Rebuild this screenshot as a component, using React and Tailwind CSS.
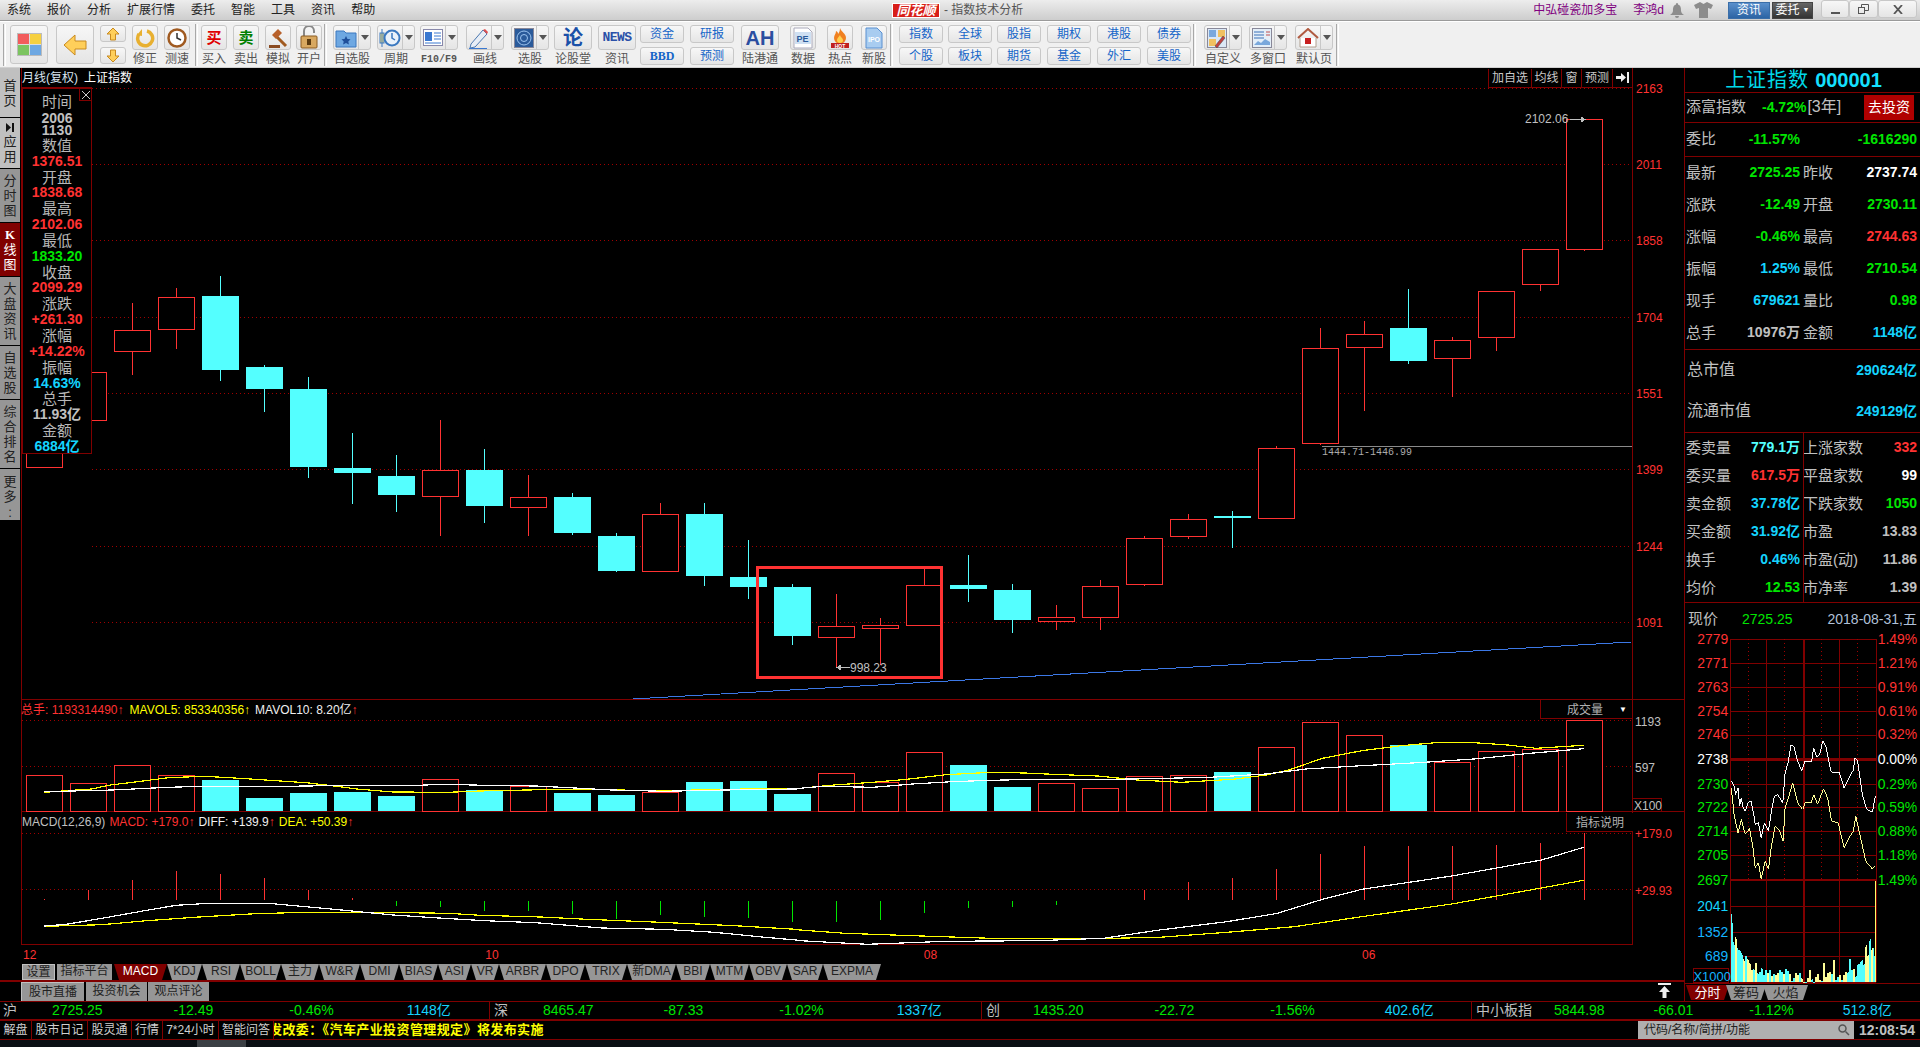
import React from 'react';

const RED = '#ff3232';
const CYAN = '#54ffff';
const LINE = '#800000';
const DOT = '#a00000';
const GREEN_TXT = '#00e600';
const GRAY_TXT = '#c0c0c0';

// [up, high, body top, body bottom, low], one row per month, 44px apart
const CANDLES = [
  [1, 400, 400, 467, 467], [1, 372, 372, 420, 420], [1, 303, 330, 351, 375], [1, 288, 297, 329, 349],
  [0, 276, 296, 370, 381], [0, 365, 367, 389, 412], [0, 377, 389, 467, 478], [0, 433, 468, 473, 504],
  [0, 455, 476, 495, 512], [1, 420, 470, 496, 536], [0, 449, 470, 506, 523], [1, 475, 497, 507, 536],
  [0, 493, 497, 533, 535], [0, 533, 536, 571, 572], [1, 503, 514, 571, 572], [0, 503, 514, 576, 586],
  [0, 540, 577, 587, 599], [0, 584, 587, 636, 645], [1, 594, 626, 637, 667], [1, 618, 625, 628, 665],
  [1, 569, 585, 625, 626], [0, 555, 585, 589, 602], [0, 584, 590, 620, 633], [1, 605, 617, 621, 630],
  [1, 580, 586, 617, 630], [1, 536, 538, 584, 586], [1, 514, 519, 536, 539], [0, 511, 516, 518, 548],
  [1, 446, 448, 518, 518], [1, 328, 348, 443, 445], [1, 321, 334, 347, 411], [0, 289, 328, 361, 364],
  [1, 337, 340, 358, 397], [1, 291, 291, 337, 351], [1, 249, 249, 284, 291], [1, 119, 119, 249, 251],
];
// [up, top]
const VOLUME = [
  [1, 775], [1, 783], [1, 765], [1, 775], [0, 780], [0, 798], [0, 793], [0, 792], [0, 796], [1, 779], [0, 790], [1, 786],
  [0, 793], [0, 795], [1, 792], [0, 782], [0, 781], [0, 794], [1, 773], [1, 782], [1, 752], [0, 765], [0, 787], [1, 783],
  [1, 788], [1, 776], [1, 775], [0, 772], [1, 747], [1, 722], [1, 735], [0, 745], [1, 762], [1, 751], [1, 749], [1, 720],
];
const MACD_BARS = [
  899, 890, 880, 871, 874, 878, 890, 898, 906, 907, 911, 911, 914, 919, 915, 917, 918, 922, 922, 920, 913, 908, 907, 905,
  901, 890, 882, 878, 869, 854, 846, 846, 846, 845, 843, 833,
];

const cx = (i) => 44.5 + 44 * i;
const leftPts = (list) => list.map(([x, y]) => [x / 1.96, 690 + y / 3]);
const rightPts = (list) => list.map(([x, y]) => [800 + x / 1.78, 690 + y / 3]);
const toStr = (list) => list.map(([x, y]) => `${x.toFixed(1)},${y.toFixed(1)}`).join(' ');

const VOL_YELLOW = toStr([
  ...leftPts([[87, 307], [130, 302], [180, 297], [216, 285], [270, 275], [330, 263], [400, 259], [470, 265], [540, 272], [600, 278], [650, 287], [700, 297], [770, 306], [880, 307], [940, 303], [1100, 298], [1200, 299], [1260, 302], [1320, 302], [1400, 298], [1560, 296]]),
  ...rightPts([[0, 295], [60, 285], [130, 277], [190, 268], [260, 254], [340, 247], [400, 249], [450, 253], [530, 258], [600, 270], [680, 277], [770, 268], [830, 255], [870, 240], [930, 205], [1000, 182], [1070, 167], [1140, 157], [1200, 158], [1260, 165], [1310, 175], [1395, 166]]),
]);
const VOL_WHITE = toStr([
  ...leftPts([[87, 305], [220, 300], [330, 292], [400, 289], [560, 289], [640, 287], [820, 286], [870, 283], [950, 286], [1050, 288], [1100, 292], [1200, 300], [1300, 304], [1450, 299], [1560, 297]]),
  ...rightPts([[0, 295], [40, 289], [130, 292], [200, 282], [270, 275], [340, 271], [420, 268], [560, 268], [620, 266], [730, 262], [830, 252], [900, 237], [1000, 227], [1100, 218], [1200, 207], [1300, 190], [1395, 176]]),
]);
const DIFF = toStr([
  ...leftPts([[87, 708], [130, 703], [200, 685], [280, 663], [345, 646], [410, 640], [525, 640], [600, 650], [690, 663], [770, 675], [860, 684], [950, 692], [1050, 698], [1180, 714], [1300, 718], [1400, 727], [1500, 742], [1560, 750]]),
  ...rightPts([[0, 752], [120, 763], [260, 754], [420, 752], [540, 745], [640, 720], [760, 695], [850, 670], [930, 628], [1000, 598], [1160, 558], [1320, 510], [1395, 472]]),
]);
const DEA = toStr([
  ...leftPts([[87, 709], [200, 704], [280, 693], [390, 681], [500, 671], [600, 667], [730, 667], [880, 670], [940, 676], [1060, 681], [1150, 688], [1280, 696], [1440, 707], [1560, 718]]),
  ...rightPts([[0, 720], [80, 730], [200, 737], [340, 745], [520, 746], [640, 742], [760, 727], [880, 710], [1000, 680], [1160, 642], [1300, 600], [1395, 571]]),
]);

const miniPts = (list) => toStr(list.map(([x, y]) => [1680 + x / 3, 620 + y / 3]));
const MINI_WHITE = miniPts([[150, 480], [157, 490], [163, 520], [170, 500], [175, 555], [180, 530], [186, 560], [192, 570], [200, 545], [210, 538], [216, 570], [222, 610], [232, 605], [240, 650], [250, 605], [262, 630], [270, 575], [280, 525], [290, 520], [305, 545], [312, 455], [322, 420], [330, 370], [338, 375], [350, 420], [362, 448], [372, 420], [392, 420], [398, 380], [408, 408], [418, 395], [425, 358], [435, 375], [450, 450], [460, 455], [475, 452], [490, 500], [505, 470], [518, 445], [522, 410], [530, 415], [545, 520], [558, 565], [575, 572], [584, 525]]);
const MINI_YELLOW = miniPts([[150, 500], [158, 580], [170, 635], [180, 595], [192, 640], [205, 622], [215, 680], [222, 740], [232, 725], [240, 775], [252, 720], [262, 745], [270, 680], [282, 615], [295, 628], [306, 660], [312, 560], [322, 530], [335, 485], [350, 545], [365, 565], [372, 545], [390, 545], [398, 520], [410, 550], [428, 502], [440, 530], [452, 600], [472, 605], [490, 680], [505, 650], [518, 630], [525, 585], [535, 630], [555, 720], [575, 745], [584, 735]]);

// envelope of the intraday volume, in px from page top
const ENVELOPE = [[1730, 913], [1732, 930], [1737, 943], [1743, 953], [1753, 960], [1770, 967], [1797, 970], [1803, 973], [1837, 970], [1853, 968], [1863, 957], [1872, 941], [1873, 950]];
const envelopeAt = (x) => {
  for (let i = 1; i < ENVELOPE.length; i++) {
    const [x0, y0] = ENVELOPE[i - 1];
    const [x1, y1] = ENVELOPE[i];
    if (x <= x1) return y0 + ((y1 - y0) * (x - x0)) / (x1 - x0);
  }
  return 950;
};
const hash = (n) => {
  const v = Math.sin(n * 12.9898) * 43758.5453;
  return v - Math.floor(v);
};
const MINI_BARS = Array.from({ length: 145 }, (_, i) => {
  const x = 1730 + i;
  const group = Math.floor(i / 2);
  return {
    x,
    top: Math.round(envelopeAt(x) + hash(group) * 12 - (hash(group + 50) > 0.9 ? 12 : 0)),
    yellow: hash(group + 99) > 0.55,
  };
});

const Dotted = ({ y, x1 = 22, x2 = 1632 }) => (
  <line x1={x1} x2={x2} y1={y + 0.5} y2={y + 0.5} stroke={DOT} strokeDasharray="1 3" />
);

function Candle({ i, data }) {
  const [up, high, top, bottom, low] = data;
  const x = cx(i);
  const color = up ? RED : CYAN;
  return (
    <g>
      <line x1={x} x2={x} y1={high} y2={low} stroke={color} />
      {up ? (
        <rect x={x - 18} y={top + 0.5} width={36} height={bottom - top} fill="#000" stroke={color} />
      ) : (
        <rect x={x - 18.5} y={top} width={37} height={bottom - top} fill={color} />
      )}
    </g>
  );
}

function PriceChart() {
  const axis = [[88, '2163'], [164, '2011'], [240, '1858'], [317, '1704'], [393, '1551'], [469, '1399'], [546, '1244'], [622, '1091']];
  return (
    <svg className="absolute inset-0" width="1663" height="632" viewBox="21 68 1663 632" shapeRendering="crispEdges">
      <line x1="21.5" x2="21.5" y1="68" y2="700" stroke={LINE} />
      <line x1="1632.5" x2="1632.5" y1="68" y2="700" stroke={LINE} />
      <line x1="21" x2="1684" y1="699.5" y2="699.5" stroke={LINE} />
      <line x1="21" x2="92" y1="88" y2="88" stroke={LINE} strokeWidth="2" />
      {axis.map(([y, label]) => (
        <g key={label}>
          <Dotted y={y} x1={92} />
          <text x="1636" y={y + 5} fontSize="12" fill={RED} textRendering="optimizeSpeed">{label}</text>
        </g>
      ))}
      <line x1="633" y1="699" x2="1631" y2="642" stroke="#3c78e6" />
      <line x1="1322" y1="446.5" x2="1632" y2="446.5" stroke="#8a8a8a" />
      {CANDLES.map((d, i) => <Candle key={i} i={i} data={d} />)}
      <rect x="757.5" y="567.5" width="184" height="110" fill="none" stroke={RED} strokeWidth="3" />
      <line x1="840" x2="850" y1="667.5" y2="667.5" stroke={GRAY_TXT} />
      <path d="M836 667.5l5-3v6z" fill={GRAY_TXT} />
      <text x="850" y="672" fontSize="12" fill={GRAY_TXT}>998.23</text>
      <text x="1525" y="123" fontSize="12" fill={GRAY_TXT}>2102.06</text>
      <line x1="1570" x2="1582" y1="119.5" y2="119.5" stroke={GRAY_TXT} />
      <path d="M1586 119.5l-5-3v6z" fill={GRAY_TXT} />
      <text x="1322" y="455" fontSize="10" fill="#aaa" fontFamily="'Liberation Mono', monospace">1444.71-1446.99</text>
    </svg>
  );
}

function VolumeChart() {
  return (
    <svg className="absolute inset-0" width="1663" height="112" viewBox="21 700 1663 112" shapeRendering="crispEdges">
      <line x1="21.5" x2="21.5" y1="700" y2="812" stroke={LINE} />
      <line x1="1632.5" x2="1632.5" y1="700" y2="812" stroke={LINE} />
      <Dotted y={720} />
      <Dotted y={766} />
      <line x1="21" x2="1684" y1="811.5" y2="811.5" stroke={LINE} />
      {VOLUME.map(([up, top], i) =>
        up ? (
          <rect key={i} x={cx(i) - 18} y={top + 0.5} width="36" height={811 - top} fill="#000" stroke={RED} />
        ) : (
          <rect key={i} x={cx(i) - 18.5} y={top} width="37" height={811 - top} fill={CYAN} />
        )
      )}
      <polyline points={VOL_YELLOW} fill="none" stroke="#ffff00" strokeWidth="1.2" />
      <polyline points={VOL_WHITE} fill="none" stroke="#fff" strokeWidth="1.2" />
      <text x="1635" y="726" fontSize="12" fill={GRAY_TXT}>1193</text>
      <text x="1635" y="772" fontSize="12" fill={GRAY_TXT}>597</text>
      <rect x="1632.5" y="798.5" width="29" height="13" fill="none" stroke={LINE} />
      <text x="1634" y="810" fontSize="12" fill={GRAY_TXT}>X100</text>
    </svg>
  );
}

function MacdChart() {
  return (
    <svg className="absolute inset-0" width="1663" height="133" viewBox="21 812 1663 133" shapeRendering="crispEdges">
      <line x1="21.5" x2="21.5" y1="812" y2="945" stroke={LINE} />
      <line x1="1632.5" x2="1632.5" y1="812" y2="945" stroke={LINE} />
      <Dotted y={833} />
      <Dotted y={889} />
      <line x1="21" x2="1633" y1="944.5" y2="944.5" stroke={LINE} />
      {MACD_BARS.map((end, i) => (
        <line key={i} x1={cx(i)} x2={cx(i)} y1={end < 900 ? 900 : 901} y2={end} stroke={end < 900 ? RED : '#00e600'} />
      ))}
      <polyline points={DEA} fill="none" stroke="#ffff00" strokeWidth="1.2" />
      <polyline points={DIFF} fill="none" stroke="#fff" strokeWidth="1.2" />
      <text x="1635" y="838" fontSize="12" fill={RED}>+179.0</text>
      <text x="1635" y="895" fontSize="12" fill={RED}>+29.93</text>
    </svg>
  );
}

function ChartHeader() {
  const cells = [
    ['加自选', 'w-[43px]'],
    ['均线', 'w-[30px]'],
    ['窗', 'w-[20px]'],
    ['预测', 'w-[31px]'],
  ];
  return (
    <div className="absolute left-0 right-[52px] top-0 flex h-[20px] items-center justify-between">
      <div className="flex items-center pl-[1px] text-[12px] leading-[18px]">
        <span className="text-[#d8e4f0]">月线(复权)</span>
        <span className="ml-[6px] text-white">上证指数</span>
      </div>
      <div className="flex h-[19px] border-l border-b border-[#800000] text-[12px] text-[#c8c8c8]">
        {cells.map(([label, w]) => (
          <div key={label} className={`flex items-center justify-center border-r border-[#800000] ${w}`}>{label}</div>
        ))}
        <div className="flex w-[19px] items-center justify-center">
          <svg width="13" height="11" viewBox="0 0 13 11"><path d="M0 4h5V1l5 4.5L5 10V7H0z" fill="#eee" /><rect x="11" y="0" width="2" height="11" fill="#eee" /></svg>
        </div>
      </div>
    </div>
  );
}

function InfoPanel() {
  const rows = [
    ['开盘', '1838.68', 'text-[#ff3232]'],
    ['最高', '2102.06', 'text-[#ff3232]'],
    ['最低', '1833.20', 'text-[#00e600]'],
    ['收盘', '2099.29', 'text-[#ff3232]'],
    ['涨跌', '+261.30', 'text-[#ff3232]'],
    ['涨幅', '+14.22%', 'text-[#ff3232]'],
    ['振幅', '14.63%', 'text-[#14d4ff]'],
    ['总手', '11.93亿', 'text-[#c0c0c0]'],
    ['金额', '6884亿', 'text-[#14d4ff]'],
  ];
  const label = 'h-[15.85px] text-[15px] leading-[15.85px] text-[#b8b8b8]';
  const value = 'h-[15.85px] text-[14px] font-bold leading-[15.85px]';
  return (
    <div className="absolute left-[1px] top-[20px] h-[366px] w-[70px] border border-[#800000] bg-black pt-[5px] text-center">
      <div className="absolute right-0 top-0 flex h-[12px] w-[12px] items-center justify-center border-b border-l border-[#800000]">
        <svg width="8" height="8" viewBox="0 0 8 8"><path d="M0 0l8 8M8 0L0 8" stroke="#ccc" /></svg>
      </div>
      <div className={label}>时间</div>
      <div className="mt-[2px] h-[12px] text-[14px] font-bold leading-[12px] text-[#c0c0c0]">2006</div>
      <div className="h-[12px] text-[14px] font-bold leading-[12px] text-[#c0c0c0]">1130</div>
      <div className={`mt-[2px] ${label}`}>数值</div>
      <div className={`${value} text-[#ff3232]`}>1376.51</div>
      {rows.map(([name, val, color]) => (
        <React.Fragment key={name}>
          <div className={label}>{name}</div>
          <div className={`${value} ${color}`}>{val}</div>
        </React.Fragment>
      ))}
    </div>
  );
}

function IndicatorTabs() {
  const tabs = [
    ['KDJ', 'w-[35px]'], ['RSI', 'w-[38px]'], ['BOLL', 'w-[41px]'], ['主力', 'w-[38px]'], ['W&R', 'w-[41px]'], ['DMI', 'w-[39px]'],
    ['BIAS', 'w-[39px]'], ['ASI', 'w-[33px]'], ['VR', 'w-[28px]'], ['ARBR', 'w-[47px]'], ['DPO', 'w-[39px]'], ['TRIX', 'w-[42px]'],
    ['新DMA', 'w-[49px]'], ['BBI', 'w-[34px]'], ['MTM', 'w-[39px]'], ['OBV', 'w-[38px]'], ['SAR', 'w-[36px]'], ['EXPMA', 'w-[58px]'],
  ];
  const trapezoid = '[clip-path:polygon(0_0,100%_0,calc(100%-5px)_100%,5px_100%)]';
  return (
    <div className="flex h-[16px] bg-black pl-[1px] text-[12px] leading-[15px] text-[#222]">
      <div className="w-[33px] border border-[#c0c0c0] bg-[#969696] text-center">设置</div>
      <div className="ml-[2px] w-[55px] bg-[#969696] text-center">指标平台</div>
      <div className={`ml-[2px] w-[53px] bg-[#800000] text-center text-white ${trapezoid}`}>MACD</div>
      {tabs.map(([name, w]) => (
        <div key={name} className={`bg-[#969696] text-center ${w} ${trapezoid}`}>{name}</div>
      ))}
    </div>
  );
}

function ChartArea() {
  const xTicks = [['12', 'ml-[2px]'], ['10', 'ml-[449px]'], ['08', 'ml-[425px]'], ['06', 'ml-[425px]']];
  return (
    <div className="flex w-[1663px] flex-col">
      <div className="relative h-[632px]">
        <PriceChart />
        <ChartHeader />
        <InfoPanel />
      </div>
      <div className="relative h-[112px]">
        <VolumeChart />
        <div className="absolute left-0 top-[3px] flex whitespace-nowrap text-[12px] leading-[15px]">
          <span className="text-[#ff3232]">总手: 1193314490↑</span>
          <span className="ml-[6px] text-[#ffff00]">MAVOL5: 853340356↑</span>
          <span className="ml-[5px] text-[#f0f0f0]">MAVOL10: 8.20亿<span className="text-[#ff3232]">↑</span></span>
        </div>
        <div className="absolute left-[1519px] top-0 flex h-[19px] w-[92px] items-center border-b border-l border-[#800000] bg-black pl-[26px] pt-[2px] text-[12px] text-[#b0b0b0]">
          成交量<span className="ml-[16px] text-[8px] text-white">▼</span>
        </div>
      </div>
      <div className="relative h-[133px]">
        <MacdChart />
        <div className="absolute left-[1px] top-[3px] flex whitespace-nowrap text-[12px] leading-[15px]">
          <span className="text-[#c0c0c0]">MACD(12,26,9)</span>
          <span className="ml-[4px] text-[#ff3232]">MACD: +179.0↑</span>
          <span className="ml-[4px] text-[#f0f0f0]">DIFF: +139.9<span className="text-[#ff3232]">↑</span></span>
          <span className="ml-[4px] text-[#ffff00]">DEA: +50.39<span className="text-[#ff3232]">↑</span></span>
        </div>
        <div className="absolute left-[1545px] top-[1px] flex h-[19px] w-[67px] items-center justify-center border-b border-l border-[#800000] bg-black pt-[1px] text-[12px] text-[#b0b0b0]">指标说明</div>
      </div>
      <div className="flex h-[19px] items-center text-[12px] text-[#ff3232]">
        {xTicks.map(([label, ml]) => <span key={label} className={ml}>{label}</span>)}
      </div>
      <IndicatorTabs />
    </div>
  );
}

function LeftTabs() {
  const tabs = [
    ['首页', 'h-[49px] bg-[#c0c0c0] text-[#222]'],
    ['应用', 'h-[50px] bg-[#c0c0c0] text-[#222]', true],
    ['分时图', 'h-[53px] bg-[#969696] text-[#222]'],
    ['K线图', 'h-[53px] bg-[#800000] text-white'],
    ['大盘资讯', 'h-[68px] bg-[#969696] text-[#222]'],
    ['自选股', 'h-[53px] bg-[#969696] text-[#222]'],
    ['综合排名', 'h-[68px] bg-[#969696] text-[#222]'],
    ['更多..', 'h-[51px] bg-[#969696] text-[#222]'],
  ];
  return (
    <div className="flex w-[21px] flex-col gap-[1px] pr-[1px]">
      {tabs.map(([name, cls, icon]) => (
        <div key={name} className={`flex flex-col items-center justify-center overflow-hidden text-[13px] leading-[15px] ${cls}`}>
          {icon && (
            <svg className="mb-[2px]" width="9" height="9" viewBox="0 0 9 9"><path d="M0 0l5 4.500L0 9z" fill="#111" /><rect x="6" y="0" width="2" height="9" fill="#111" /></svg>
          )}
          {name.split('').map((ch, i) => (
            <span key={i} className={ch === '.' ? 'h-[6px] leading-[6px]' : ch === 'K' ? "font-bold [font-family:'Liberation_Serif',serif]" : ''}>{ch}</span>
          ))}
        </div>
      ))}
    </div>
  );
}

function QuoteRow({ a, av, ac, b, bv, bc, h = 'h-[32px]' }) {
  return (
    <div className={`flex items-center ${h}`}>
      <div className="flex w-[118px] items-center justify-between pl-[1px] pr-[3px]">
        <span className="text-[15px] text-[#c0c0c0]">{a}</span>
        <span className={`text-[14px] font-bold ${ac}`}>{av}</span>
      </div>
      <div className="flex flex-1 items-center justify-between pr-[3px]">
        <span className="text-[15px] text-[#c0c0c0]">{b}</span>
        <span className={`text-[14px] font-bold ${bc}`}>{bv}</span>
      </div>
    </div>
  );
}

function MiniChart() {
  const grid = [637, 661, 685, 709, 733, 758, 783, 806, 830, 854, 879, 905, 931, 956, 982];
  const left = [
    ['2779', RED], ['2771', RED], ['2763', RED], ['2754', RED], ['2746', RED], ['2738', '#fff'],
    ['2730', GREEN_TXT], ['2722', GREEN_TXT], ['2714', GREEN_TXT], ['2705', GREEN_TXT], ['2697', GREEN_TXT],
    ['2041', '#14d4ff'], ['1352', '#14b4ff'], ['689', '#14b4ff'],
  ];
  const right = [
    ['1.49%', RED], ['1.21%', RED], ['0.91%', RED], ['0.61%', RED], ['0.32%', RED], ['0.00%', '#fff'],
    ['0.29%', GREEN_TXT], ['0.59%', GREEN_TXT], ['0.88%', GREEN_TXT], ['1.18%', GREEN_TXT], ['1.49%', GREEN_TXT],
  ];
  return (
    <svg width="236" height="355" viewBox="1684 628 236 355" shapeRendering="crispEdges">
      {grid.map((y) => (
        <line key={y} x1="1729" x2="1875" y1={y + 0.5} y2={y + 0.5} stroke={LINE} strokeWidth={y === 758 ? 3 : 1} />
      ))}
      <line x1="1729" x2="1875" y1="879.5" y2="879.5" stroke={LINE} strokeWidth="2" />
      {[1729, 1765, 1838, 1875].map((x) => <line key={x} x1={x + 0.5} x2={x + 0.5} y1="637" y2="982" stroke={LINE} />)}
      <line x1="1803" x2="1803" y1="637" y2="982" stroke={LINE} strokeWidth="2" />
      {[1747, 1783, 1820, 1856].map((x) => <line key={x} x1={x + 0.5} x2={x + 0.5} y1="637" y2="879" stroke={DOT} strokeDasharray="1 3" />)}
      {MINI_BARS.map((b) => (
        <line key={b.x} x1={b.x + 0.5} x2={b.x + 0.5} y1={b.top} y2="982" stroke={b.yellow ? '#ffff99' : CYAN} />
      ))}
      <line x1="1874.5" x2="1874.5" y1="880" y2="982" stroke="#ffff66" />
      <polyline points={MINI_YELLOW} fill="none" stroke="#ffff99" />
      <polyline points={MINI_WHITE} fill="none" stroke="#fff" />
      {left.map(([label, color], i) => (
        <text key={label} x="1727" y={grid[i] + 5} fontSize="14" textAnchor="end" fill={color}>{label}</text>
      ))}
      {right.map(([label, color], i) => (
        <text key={label + i} x="1877" y={grid[i] + 5} fontSize="14" fill={color}>{label}</text>
      ))}
      <rect x="1691.5" y="968.5" width="36" height="14" fill="none" stroke={LINE} />
      <text x="1692" y="981" fontSize="13" fill="#14b4ff">X1000</text>
    </svg>
  );
}

function RightPanel() {
  const g = 'text-[#00e600]';
  const r = 'text-[#ff3232]';
  const c = 'text-[#14d4ff]';
  const n = 'text-[#c0c0c0]';
  const w = 'text-white';
  const quotes = [
    ['最新', '2725.25', g, '昨收', '2737.74', w],
    ['涨跌', '-12.49', g, '开盘', '2730.11', g],
    ['涨幅', '-0.46%', g, '最高', '2744.63', r],
    ['振幅', '1.25%', c, '最低', '2710.54', g],
    ['现手', '679621', c, '量比', '0.98', g],
    ['总手', '10976万', n, '金额', '1148亿', c],
  ];
  const breadth = [
    ['委卖量', '779.1万', 'text-[#54ffff]', '上涨家数', '332', r],
    ['委买量', '617.5万', r, '平盘家数', '99', w],
    ['卖金额', '37.78亿', c, '下跌家数', '1050', g],
    ['买金额', '31.92亿', c, '市盈', '13.83', n],
    ['换手', '0.46%', c, '市盈(动)', '11.86', n],
    ['均价', '12.53', g, '市净率', '1.39', n],
  ];
  const slant = '[clip-path:polygon(0_0,100%_0,calc(100%-5px)_100%,5px_100%)]';
  return (
    <div className="flex h-[933px] w-[236px] flex-col border-l border-[#800000]">
      <div className="flex h-[24px] items-center justify-center pl-[2px] text-[20px] leading-[24px] tracking-[1px] text-[#00d8e8]">
        上证指数 <span className="ml-[6px] font-bold tracking-normal text-[#14e0ff]">000001</span>
      </div>
      <div className="flex h-[30px] items-center border-t border-[#800000] pl-[1px] pr-[6px]">
        <span className="text-[15px] text-[#c0c0c0]">添富指数</span>
        <span className="ml-[16px] text-[14px] font-bold text-[#00e600]">-4.72%</span>
        <span className="ml-[1px] text-[16px] text-[#c0c0c0]">[3年]</span>
        <span className="ml-auto flex h-[25px] w-[50px] items-center justify-center bg-[#b00000] text-[14px] text-white">去投资</span>
      </div>
      <div className="border-t border-[#800000]">
        <QuoteRow a="委比" av="-11.57%" ac={g} b="" bv="-1616290" bc={g} h="h-[33px]" />
      </div>
      <div className="border-t border-[#800000]">
        {quotes.map(([a, av, ac, b, bv, bc]) => <QuoteRow key={a} a={a} av={av} ac={ac} b={b} bv={bv} bc={bc} />)}
      </div>
      <div className="border-t border-[#800000] pl-[2px] pr-[3px]">
        <div className="flex h-[41px] items-center justify-between">
          <span className="text-[16px] text-[#c0c0c0]">总市值</span>
          <span className="text-[14px] font-bold text-[#14d4ff]">290624亿</span>
        </div>
        <div className="flex h-[41px] items-center justify-between">
          <span className="text-[16px] text-[#c0c0c0]">流通市值</span>
          <span className="text-[14px] font-bold text-[#14d4ff]">249129亿</span>
        </div>
      </div>
      <div className="relative border-t border-b border-[#800000] pt-[1px]">
        <div className="absolute bottom-0 left-[118px] top-0 w-px bg-[#800000]" />
        {breadth.map(([a, av, ac, b, bv, bc]) => <QuoteRow key={a} a={a} av={av} ac={ac} b={b} bv={bv} bc={bc} h="h-[28px]" />)}
      </div>
      <div className="flex h-[27px] items-end justify-between pb-[1px] pl-[3px] pr-[3px] text-[14px]">
        <span className="text-[15px] leading-[20px] text-[#c0c0c0]">现价</span>
        <span className="ml-[24px] leading-[20px] text-[#00e600]">2725.25</span>
        <span className="ml-auto leading-[20px] text-[#b0c0d8]">2018-08-31,五</span>
      </div>
      <MiniChart />
      <div className="flex h-[18px] items-center border-t border-[#800000] pl-[1px] text-[13px] leading-[15px]">
        <span className={`w-[43px] bg-[#800000] text-center text-white ${slant}`}>分时</span>
        <span className={`-ml-[3px] w-[40px] bg-[#969696] text-center text-[#222] ${slant}`}>筹码</span>
        <span className={`-ml-[3px] w-[45px] bg-[#969696] text-center text-[#222] ${slant}`}>火焰</span>
      </div>
    </div>
  );
}

function SubTabsRow() {
  return (
    <div className="relative flex h-[19px] items-stretch pl-[21px] text-[12px] leading-[18px] text-[#222]">
      <span className="w-[63px] border-l border-t border-[#c0c0c0] bg-[#969696] text-center">股市直播</span>
      <span className="ml-[2px] w-[61px] bg-[#969696] text-center">投资机会</span>
      <span className="ml-[1px] w-[61px] bg-[#969696] text-center">观点评论</span>
      <svg className="absolute left-[1658px] top-[1px]" width="13" height="15" viewBox="0 0 13 15">
        <rect x="0" y="0" width="13" height="2" fill="#eee" />
        <path d="M6.500 3L12 9H8.500v6h-4V9H1z" fill="#eee" />
      </svg>
    </div>
  );
}

function IndexCell({ name, price, chg, pct, amt, widthCls, nameCls, priceCls, chgCls, pctCls, amtCls }) {
  return (
    <div className={`relative flex h-full items-center text-[14px] ${widthCls}`}>
      <span className={`text-[14px] text-[#c0c0c0] ${nameCls}`}>{name}</span>
      <span className={`text-[#00e600] ${priceCls}`}>{price}</span>
      <span className={`text-[#00e600] ${chgCls}`}>{chg}</span>
      <span className={`text-[#00e600] ${pctCls}`}>{pct}</span>
      <span className={`text-[#14d4ff] ${amtCls}`}>{amt}</span>
    </div>
  );
}

function IndexRow() {
  return (
    <div className="flex h-[20px] shrink-0 border-t border-b-2 border-[#800000]">
      <IndexCell name="沪" price="2725.25" chg="-12.49" pct="-0.46%" amt="1148亿" widthCls="w-[490px] border-r border-[#800000]" nameCls="ml-[3px]" priceCls="ml-[35px]" chgCls="ml-[71px]" pctCls="ml-[76px]" amtCls="ml-[73px]" />
      <IndexCell name="深" price="8465.47" chg="-87.33" pct="-1.02%" amt="1337亿" widthCls="w-[492px] border-r border-[#800000]" nameCls="ml-[4px]" priceCls="ml-[35px]" chgCls="ml-[70px]" pctCls="ml-[76px]" amtCls="ml-[73px]" />
      <IndexCell name="创" price="1435.20" chg="-22.72" pct="-1.56%" amt="402.6亿" widthCls="w-[490px] border-r border-[#800000]" nameCls="ml-[4px]" priceCls="ml-[33px]" chgCls="ml-[71px]" pctCls="ml-[76px]" amtCls="ml-[70px]" />
      <IndexCell name="中小板指" price="5844.98" chg="-66.01" pct="-1.12%" amt="512.8亿" widthCls="flex-1" nameCls="ml-[4px]" priceCls="ml-[22px]" chgCls="ml-[49px]" pctCls="ml-[56px]" amtCls="ml-[49px]" />
    </div>
  );
}

function TickerRow() {
  const cells = [
    ['解盘', 'w-[32px]'], ['股市日记', 'w-[56px]'], ['股灵通', 'w-[44px]'], ['行情', 'w-[31px]'], ['7*24小时', 'w-[56px]'], ['智能问答', 'w-[55px]'],
  ];
  return (
    <div className="flex h-[19px] shrink-0 items-stretch border-b border-[#800000] text-[12px] leading-[18px]">
      {cells.map(([label, w]) => (
        <span key={label} className={`border-r border-[#800000] text-center text-[#d0d0d0] ${w}`}>{label}</span>
      ))}
      <div className="w-[1364px] overflow-hidden">
        <div className="ml-[-5px] whitespace-nowrap text-[13px] font-bold tracking-[0.4px] text-[#ffff00]">发改委：《汽车产业投资管理规定》将发布实施</div>
      </div>
      <div className="flex w-[216px] items-center bg-[#b0b0b0] pl-[6px] text-[#222]">
        代码/名称/简拼/功能
        <svg className="ml-auto mr-[4px]" width="12" height="12" viewBox="0 0 12 12" fill="none" stroke="#555" strokeWidth="1.500"><circle cx="4.500" cy="4.500" r="3.500" /><path d="M7.500 7.500L11 11" /></svg>
      </div>
      <span className="ml-[5px] text-[14px] font-bold text-[#c0c0c0]">12:08:54</span>
    </div>
  );
}

/* toolbar */
const BTN = 'rounded-[3px] border border-[#c8c8c8] bg-linear-to-b from-[#f7f7f7] to-[#e5e5e5]';

function Grip({ className }) {
  return <div className={`mt-[2px] h-[42px] w-[3px] border-l border-r border-l-[#a8a8a8] border-r-white ${className}`} />;
}

function Tool({ className, label, children, drop, labelCls = 'text-[12px]' }) {
  return (
    <div className={`flex flex-col items-center ${className}`}>
      <div className={`mt-[3px] flex h-[25px] w-full items-center justify-center ${BTN}`}>
        <div className="flex flex-1 items-center justify-center">{children}</div>
        {drop && (
          <div className="flex h-full w-[12px] items-center justify-center border-l border-[#c8c8c8]">
            <span className="h-0 w-0 border-x-[4px] border-t-[5px] border-x-transparent border-t-[#555]" />
          </div>
        )}
      </div>
      <span className={`mt-[2px] whitespace-nowrap leading-[15px] text-[#555] ${labelCls}`}>{label}</span>
    </div>
  );
}

function PairBtn({ className, top, bottom, bold }) {
  const cell = `flex h-[18px] items-center justify-center text-[12px] text-[#1565c8] ${BTN}`;
  return (
    <div className={`mt-[3px] flex flex-col gap-[4px] ${className}`}>
      <div className={cell}>{top}</div>
      <div className={`${cell} ${bold ? "font-bold [font-family:'Liberation_Serif',serif]" : ''}`}>{bottom}</div>
    </div>
  );
}

const ArrowV = ({ down }) => (
  <svg width="14" height="14" viewBox="0 0 14 14" className={down ? 'rotate-180' : ''}>
    <path d="M7 1l6 6H9.500v6h-5V7H1z" fill="#ffcf5a" stroke="#c88a20" />
  </svg>
);

function Toolbar() {
  return (
    <div className="flex h-[46px] shrink-0 items-start border-b border-[#d0d0d0] bg-[#f0f0f0]">
      <Grip className="ml-[3px]" />
      <div className={`ml-[4px] mt-[3px] flex h-[39px] w-[38px] items-center justify-center ${BTN}`}>
        <div className="grid grid-cols-2 gap-[1px] border border-[#bbb] bg-[#ddd]">
          <div className="h-[10px] w-[11px] bg-[#f25c5c]" />
          <div className="h-[10px] w-[11px] bg-[#f6d040]" />
          <div className="h-[10px] w-[11px] bg-[#7cc460]" />
          <div className="h-[10px] w-[11px] bg-[#6ea8e2]" />
        </div>
      </div>
      <div className={`ml-[8px] mt-[3px] flex h-[39px] w-[38px] items-center justify-center ${BTN}`}>
        <svg width="24" height="22" viewBox="0 0 24 22"><path d="M1 11L12 1v6h11v8H12v6z" fill="#ffcf5a" stroke="#c88a20" /></svg>
      </div>
      <div className="ml-[6px] mt-[3px] flex w-[26px] flex-col gap-[5px]">
        <div className={`flex h-[17px] items-center justify-center ${BTN}`}><ArrowV /></div>
        <div className={`flex h-[17px] items-center justify-center ${BTN}`}><ArrowV down /></div>
      </div>
      <Tool className="ml-[6px] w-[26px]" label="修正">
        <svg width="20" height="20" viewBox="0 0 20 20" fill="none"><path d="M12 3a7.500 7.500 0 1 1-8 3" stroke="#e8b030" strokeWidth="3.500" /><path d="M7 1v7l-5-1z" fill="#e8b030" /></svg>
      </Tool>
      <Tool className="ml-[6px] w-[26px]" label="测速">
        <svg width="20" height="20" viewBox="0 0 20 20"><circle cx="10" cy="10" r="8.500" fill="#fff" stroke="#a05a20" strokeWidth="2.500" /><path d="M10 5v5l4 2" fill="none" stroke="#333" strokeWidth="1.500" /></svg>
      </Tool>
      <Grip className="ml-[5px]" />
      <Tool className="ml-[3px] w-[26px]" label="买入"><span className="text-[15px] font-bold leading-none text-[#e00000]">买</span></Tool>
      <Tool className="ml-[6px] w-[26px]" label="卖出"><span className="text-[15px] font-bold leading-none text-[#008000]">卖</span></Tool>
      <Tool className="ml-[6px] w-[26px]" label="模拟">
        <svg width="20" height="22" viewBox="0 0 20 22"><path d="M8 9l10 10" stroke="#a05a20" strokeWidth="3" /><path d="M4 8l6-6 4 4-6 6z" fill="#b8602a" /><rect x="1" y="18" width="11" height="3" fill="#8a4a20" /></svg>
      </Tool>
      <Tool className="ml-[5px] w-[26px]" label="开户">
        <svg width="20" height="23" viewBox="0 0 20 23"><path d="M5 10V5a5 5 0 0 1 10 0v2" fill="none" stroke="#888" strokeWidth="2" /><rect x="2" y="10" width="16" height="12" rx="1" fill="#d8a860" stroke="#8a5a20" /><rect x="8" y="13" width="4" height="6" fill="#5a3a10" /></svg>
      </Tool>
      <Grip className="ml-[2px]" />
      <Tool className="ml-[6px] w-[38px]" label="自选股" drop>
        <svg width="22" height="20" viewBox="0 0 22 20"><path d="M1 3h8l2 2h10v14H1z" fill="#6ea8e2" stroke="#3a78c0" /><path d="M11 8l1.500 3 3 .3-2.200 2.100.6 3-2.900-1.500-2.900 1.500.6-3-2.200-2.100 3-.3z" fill="#1f4f9a" /></svg>
      </Tool>
      <Tool className="ml-[6px] w-[38px]" label="周期" drop>
        <svg width="22" height="20" viewBox="0 0 22 20"><rect x="1" y="5" width="4" height="10" fill="#f8e080" stroke="#3a78c0" /><line x1="3" y1="1" x2="3" y2="19" stroke="#3a78c0" /><circle cx="13" cy="10" r="7.500" fill="#eaf2fb" stroke="#3a78c0" strokeWidth="2" /><path d="M13 5v5l3 2" fill="none" stroke="#3a78c0" strokeWidth="1.500" /></svg>
      </Tool>
      <Tool className="ml-[5px] w-[38px]" label="F10/F9" labelCls="text-[10px] font-bold [font-family:'Liberation_Mono',monospace]" drop>
        <svg width="20" height="17" viewBox="0 0 20 17"><rect x="0.500" y="0.500" width="19" height="16" fill="#fff" stroke="#88a" /><rect x="2" y="3" width="7" height="9" fill="#3a78d0" /><path d="M11 4h7M11 7h7M11 10h7M2 14h16" stroke="#3a78d0" /></svg>
      </Tool>
      <Tool className="ml-[8px] w-[38px]" label="画线" drop>
        <svg width="20" height="22" viewBox="0 0 20 22"><path d="M2 17L14 3l4 4L6 20l-5 1z" fill="#e8eef6" stroke="#4a78b0" /><path d="M14 3l4 4 1-2-3-3z" fill="#e05050" /><line x1="0" y1="21.500" x2="18" y2="21.500" stroke="#3a78d0" /></svg>
      </Tool>
      <Tool className="ml-[7px] w-[38px]" label="选股" drop>
        <svg width="20" height="20" viewBox="0 0 20 20"><rect x="0.500" y="0.500" width="19" height="19" fill="#2a5a9a" stroke="#889" /><circle cx="10" cy="10" r="7" fill="none" stroke="#9cc4f0" /><circle cx="10" cy="10" r="3.500" fill="none" stroke="#9cc4f0" /></svg>
      </Tool>
      <Tool className="ml-[5px] w-[38px]" label="论股堂"><span className="text-[20px] font-bold leading-none text-[#1a50a8]">论</span></Tool>
      <Tool className="ml-[6px] w-[38px]" label="资讯"><span className="text-[13px] font-bold leading-none tracking-[-0.5px] text-[#2a50a8] [font-family:'Liberation_Mono',monospace]">NEWS</span></Tool>
      <PairBtn className="ml-[4px] w-[44px]" top="资金" bottom="BBD" bold />
      <PairBtn className="ml-[6px] w-[44px]" top="研报" bottom="预测" />
      <Tool className="ml-[7px] w-[38px]" label="陆港通"><span className="text-[20px] font-bold leading-none text-[#2a4ea0]">AH</span></Tool>
      <Tool className="ml-[11px] w-[26px]" label="数据">
        <svg width="20" height="22" viewBox="0 0 20 22"><path d="M1 1h14l4 4v16H1z" fill="#fff" stroke="#aab" /><rect x="2" y="5" width="16" height="12" fill="#cfe0f2" /><text x="3.500" y="15" fontSize="9" fontWeight="bold" fill="#2a5a9a">PE</text></svg>
      </Tool>
      <Tool className="ml-[11px] w-[26px]" label="热点">
        <svg width="20" height="22" viewBox="0 0 20 22"><path d="M10 1c1 4 6 5 6 10a6 6 0 0 1-12 0c0-3 2-4 2-7 2 1 2 2 2 3 1-1 2-3 2-6z" fill="#f08020" /><path d="M10 8c0 2 3 3 3 5a3 3 0 0 1-6 0c0-2 2-3 3-5z" fill="#ffd050" /><rect x="1" y="16" width="18" height="5" fill="#c02020" /><text x="10" y="20.500" fontSize="5" fontWeight="bold" textAnchor="middle" fill="#fff">HOT</text></svg>
      </Tool>
      <Tool className="ml-[8px] w-[26px]" label="新股">
        <svg width="18" height="22" viewBox="0 0 18 22"><path d="M1 1h11l5 5v15H1z" fill="#a8ccf0" stroke="#5a90d0" /><text x="9" y="15" fontSize="7" fontWeight="bold" textAnchor="middle" fill="#fff">IPO</text></svg>
      </Tool>
      <Grip className="ml-[3px]" />
      <PairBtn className="ml-[6px] w-[44px]" top="指数" bottom="个股" />
      <PairBtn className="ml-[5px] w-[44px]" top="全球" bottom="板块" />
      <PairBtn className="ml-[5px] w-[44px]" top="股指" bottom="期货" />
      <PairBtn className="ml-[6px] w-[44px]" top="期权" bottom="基金" />
      <PairBtn className="ml-[6px] w-[44px]" top="港股" bottom="外汇" />
      <PairBtn className="ml-[6px] w-[44px]" top="债券" bottom="美股" />
      <Grip className="ml-[2px]" />
      <Tool className="ml-[8px] w-[38px]" label="自定义" drop>
        <svg width="20" height="20" viewBox="0 0 20 20"><rect x="0.500" y="0.500" width="19" height="19" fill="#dbe8f6" stroke="#889" /><rect x="2" y="2" width="7" height="7" fill="#7aa8dc" /><rect x="11" y="2" width="7" height="7" fill="#f0c060" /><rect x="2" y="11" width="7" height="7" fill="#f0c060" /><path d="M8 18L16 8l2 2-8 10z" fill="#c04040" stroke="#444" strokeWidth="0.500" /></svg>
      </Tool>
      <Tool className="ml-[7px] w-[38px]" label="多窗口" drop>
        <svg width="20" height="20" viewBox="0 0 20 20"><rect x="0.500" y="0.500" width="19" height="19" fill="#e4eef8" stroke="#889" /><path d="M2 4h10M2 7h10M2 10h10" stroke="#3a70b8" /><path d="M14 4h4M14 7h4" stroke="#c05050" /><path d="M2 17l4-4 3 2 4-4 5 3v3z" fill="#7aa8dc" /></svg>
      </Tool>
      <Tool className="ml-[8px] w-[38px]" label="默认页" drop>
        <svg width="22" height="20" viewBox="0 0 22 20"><path d="M3 10v9h16v-9" fill="#fff" stroke="#b0a090" /><path d="M1 10L11 1l10 9" fill="none" stroke="#b05a40" strokeWidth="2" /><rect x="8" y="10" width="6" height="6" fill="#c82020" /></svg>
      </Tool>
      <Grip className="ml-[3px]" />
    </div>
  );
}

function TitleBar() {
  const menus = ['系统', '报价', '分析', '扩展行情', '委托', '智能', '工具', '资讯', '帮助'];
  return (
    <div className="flex h-[20px] shrink-0 items-center whitespace-nowrap bg-linear-to-b from-[#ededed] to-[#cdcdcd] text-[12px] text-[#222]">
      <div className="ml-[7px] flex w-[369px] shrink-0 gap-[16px]">
        {menus.map((m) => <span key={m} className="shrink-0">{m}</span>)}
      </div>
      <span className="ml-[516px] flex h-[15px] w-[48px] items-center justify-center border border-white bg-[#d81e18] text-[13px] font-bold italic leading-none text-white">同花顺</span>
      <span className="ml-[4px] text-[#555]">- 指数技术分析</span>
      <span className="ml-[510px] text-[#800080]">中弘碰瓷加多宝</span>
      <span className="ml-[16px] text-[#800080]">李鸿d</span>
      <svg className="ml-[6px]" width="14" height="15" viewBox="0 0 14 15"><path d="M7 0c1 0 1 1 1 1.500 3 1 3 4 3 6 0 2 1 3 3 4.500H0c2-1.500 3-2.500 3-4.500 0-2 0-5 3-6C6 1 6 0 7 0zM5 13h4a2 2 0 0 1-4 0z" fill="#8c8c8c" /></svg>
      <svg className="ml-[10px]" width="19" height="16" viewBox="0 0 19 16"><path d="M6 0l3.500 2L13 0l6 3-2 4-3-1v10H5V6L2 7 0 3z" fill="#8c8c8c" /></svg>
      <span className="ml-[15px] flex h-[17px] w-[42px] items-center justify-center border border-[#3a6ea8] bg-linear-to-b from-[#5a90cc] to-[#2c64a4] text-white">资讯</span>
      <span className="ml-[2px] flex h-[17px] w-[41px] items-center justify-center gap-[3px] border border-[#444] bg-linear-to-b from-[#666] to-[#333] text-white">委托<span className="text-[7px]">▼</span></span>
      <div className="ml-[8px] flex h-[18px] self-start text-[#444]">
        <span className={`flex h-full w-[28px] items-end justify-center pb-[3px] ${BTN}`}><span className="h-[2px] w-[9px] bg-[#555]" /></span>
        <span className={`flex h-full w-[29px] items-center justify-center ${BTN}`}>
          <svg width="11" height="10" viewBox="0 0 11 10" fill="none" stroke="#555"><rect x="0.500" y="3.500" width="6" height="6" /><path d="M3.500 3V.5h7v6H7" /></svg>
        </span>
        <span className={`flex h-full w-[39px] items-center justify-center ${BTN}`}>
          <svg width="10" height="9" viewBox="0 0 10 9"><path d="M1 0l8 9M9 0L1 9" stroke="#555" strokeWidth="1.800" /></svg>
        </span>
      </div>
    </div>
  );
}

export default function App() {
  return (
    <div className="flex h-[1047px] w-[1920px] flex-col overflow-hidden bg-black [font-family:'Liberation_Sans','Noto_Sans_CJK_SC',sans-serif]">
      <TitleBar />
      <div className="h-[2px] shrink-0 border-b border-white bg-[#9a9a9a]" />
      <Toolbar />
      <div className="flex h-[933px] shrink-0">
        <div className="flex w-[1684px] flex-col">
          <div className="flex h-[912px]">
            <LeftTabs />
            <ChartArea />
          </div>
          <div className="h-[2px] bg-[#800000]" />
          <SubTabsRow />
        </div>
        <RightPanel />
      </div>
      <IndexRow />
      <TickerRow />
      <div className="relative h-[7px] shrink-0 bg-[#0a0f14]">
        <div className="absolute left-[197px] top-0 h-full w-[49px] bg-[#3a3f44]" />
      </div>
    </div>
  );
}
